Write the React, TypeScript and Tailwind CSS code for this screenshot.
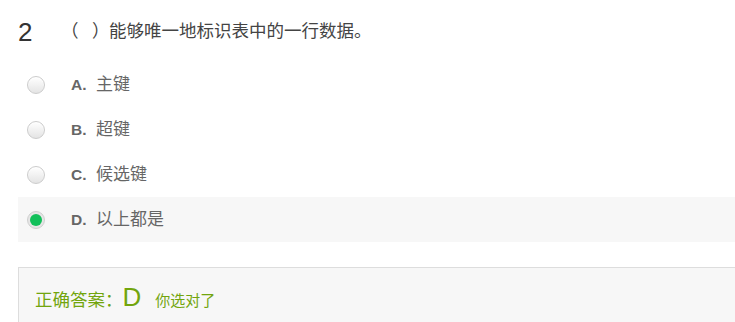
import React from "react";

const options = [
  { key: "A", text: "主键", selected: false },
  { key: "B", text: "超键", selected: false },
  { key: "C", text: "候选键", selected: false },
  { key: "D", text: "以上都是", selected: true },
];

function Radio({ selected }: { selected: boolean }) {
  if (selected) {
    return (
      <span className="flex h-[18px] w-[18px] items-center justify-center rounded-full border border-[#cfcfcf] bg-[#e6e6e6]">
        <span className="h-[12px] w-[12px] rounded-full bg-[#12c05a]" />
      </span>
    );
  }
  return (
    <span className="block h-[18px] w-[18px] rounded-full border border-[#cccccc] bg-gradient-to-b from-[#ffffff] to-[#e4e4e4] shadow-[inset_0_1px_1px_rgba(255,255,255,0.9)]" />
  );
}

export default function App() {
  return (
    <div className="h-[322px] w-[735px] overflow-hidden bg-white font-['Liberation_Sans','Noto_Sans_CJK_SC',sans-serif]">
      <div className="flex h-[62px] items-center pl-[18px] pt-[2px]">
        <span className="w-[43px] text-[26px] leading-none text-[#333333]">2</span>
        <span className="flex items-center text-[17.5px] leading-none text-[#444444]">
          <span className="inline-block w-[16px] text-right">（</span>
          <span className="ml-[15px] inline-block w-[17px] text-left">）</span>
          <span>能够唯一地标识表中的一行数据。</span>
        </span>
      </div>
      <div className="ml-[18px]">
        {options.map((o) => (
          <div
            key={o.key}
            className={
              o.selected
                ? "flex h-[45px] items-center bg-[#f7f7f7]"
                : "flex h-[45px] items-center"
            }
          >
            <span className="flex w-[53px] pl-[9px]">
              <Radio selected={o.selected} />
            </span>
            <span className="w-[25px] text-[15.5px] font-bold text-[#666666]">{o.key}.</span>
            <span className="text-[17px] text-[#666666]">{o.text}</span>
          </div>
        ))}
      </div>
      <div className="ml-[18px] mt-[25px] flex h-[64px] items-baseline border-l border-t border-[#dddddd] bg-[#f7f7f7] pl-[16px] pt-[16px] text-[#72a50d]">
        <span className="text-[17.5px]">正确答案：</span>
        <span className="text-[26px] leading-none">D</span>
        <span className="ml-[14px] text-[15px]">你选对了</span>
      </div>
    </div>
  );
}
